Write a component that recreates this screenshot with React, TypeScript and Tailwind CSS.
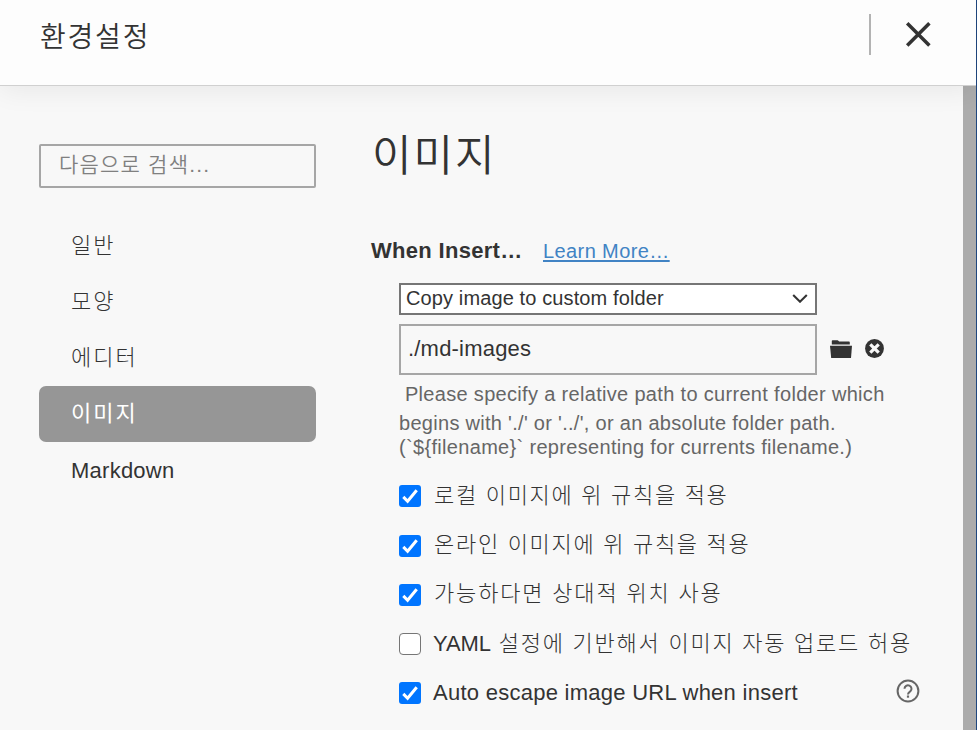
import React from "react";

const NAV = ["일반", "모양", "에디터", "이미지", "Markdown"];

type Option = { prefix?: string; label: string; checked: boolean; row: string; text: string; help?: boolean };

const OPTIONS: Option[] = [
  { label: "로컬 이미지에 위 규칙을 적용", checked: true, row: "h-[50px]", text: "ml-[13px] tracking-[1.7px] font-light" },
  { label: "온라인 이미지에 위 규칙을 적용", checked: true, row: "h-[49px]", text: "ml-[13px] pb-[2px] tracking-[1.7px] font-light" },
  { label: "가능하다면 상대적 위치 사용", checked: true, row: "h-[49px]", text: "ml-[13px] pb-[2px] tracking-[1.83px] font-light" },
  { prefix: "YAML", label: " 설정에 기반해서 이미지 자동 업로드 허용", checked: false, row: "h-[49px]", text: "ml-[12px] tracking-[1.75px] font-light" },
  { label: "Auto escape image URL when insert", checked: true, row: "h-[49px]", text: "ml-[12px] tracking-[0.26px]", help: true },
];

function CheckBox({ checked }: { checked: boolean }) {
  if (!checked) {
    return <span className="h-[22px] w-[22px] shrink-0 rounded-[4px] border-[1.5px] border-[#767676] bg-white" />;
  }
  return (
    <span className="flex h-[22px] w-[22px] shrink-0 rounded-[3px] bg-[#0075ff]">
      <svg width="22" height="22" viewBox="0 0 22 22" fill="none" stroke="#fff" strokeWidth="3">
        <path d="M4.3 11.9 8.6 16.2 17.7 5.2" />
      </svg>
    </span>
  );
}

function HelpIcon() {
  return (
    <svg className="mb-[3px]" width="24" height="24" viewBox="0 0 24 24" fill="none" stroke="#666" strokeWidth="2">
      <circle cx="12" cy="12" r="10.4" />
      <path d="M8.5 9.7a3.5 3.5 0 1 1 5.9 2.6C13 13.6 12 14 12 15.5" />
      <path d="M12 16.5v2.2" strokeWidth="2.2" />
    </svg>
  );
}

export default function App() {
  return (
    <div className="flex h-[730px] w-[977px] overflow-hidden bg-[#f8f8f8] font-['Liberation_Sans','Noto_Sans_CJK_KR',sans-serif] text-[#333]">
      <div className="flex w-[976px] flex-col">
        <header className="z-10 flex h-[86px] shrink-0 items-start border-b border-[#d0d0d0] bg-[#fdfdfd] shadow-[0_4px_28px_rgba(0,0,0,0.07)]">
          <h1 className="ml-[40px] mt-[18px] flex-1 whitespace-nowrap text-[28px] font-[350] leading-[40px] tracking-[1.8px]">환경설정</h1>
          <div className="mt-[14px] h-[41px] w-[2px] bg-[#b3b3b3]" />
          <svg className="ml-[34px] mr-[44px] mt-[21px]" width="27" height="27" viewBox="0 0 27 27" stroke="#333" strokeWidth="3.5">
            <path d="M2.2 2.2 24.4 24.4M24.4 2.2 2.2 24.4" />
          </svg>
        </header>

        <div className="flex min-h-0 flex-1">
          <aside className="ml-[39px] w-[277px] shrink-0 pt-[58px]">
            <div className="flex h-[44px] items-center rounded-[2px] border-2 border-[#a6a6a6] pb-[2px] pl-[18px]">
              <span className="whitespace-nowrap text-[21px] font-[350] leading-[30px] tracking-[1.2px] text-[#808080]">다음으로 검색...</span>
            </div>
            <nav className="mt-[30px]">
              {NAV.map((item) => (
                <div
                  key={item}
                  className={
                    "flex h-[56px] items-center rounded-[7px] pl-[32px] text-[22px] " +
                    (item === "Markdown" ? "tracking-[0.25px] " : "pb-[1px] tracking-[2px] ") +
                    (item === "이미지" ? "bg-[#969696] font-normal text-white" : item === "Markdown" ? "" : "font-light")
                  }
                >
                  {item}
                </div>
              ))}
            </nav>
          </aside>

          <main className="ml-[56px] flex-1">
            <h2 className="mt-[38px] h-[64px] whitespace-nowrap text-[43px] font-[350] leading-[64px] tracking-[2px]">이미지</h2>
            <div className="mt-[46px] flex h-[32px] items-center whitespace-nowrap">
              <span className="-ml-px w-[172px] text-[22px] font-bold tracking-[0.3px]">When Insert…</span>
              <a className="mt-px text-[20px] tracking-[0.4px] text-[#4183c4] underline decoration-2 underline-offset-2">Learn More…</a>
            </div>
            <div className="ml-[27px] mt-[17px]">
              <div className="flex h-[32px] w-[418px] items-center justify-between border-2 border-[#767676] bg-white pb-[2px] pl-[6px] pr-[7px]">
                <span className="-ml-px text-[20px] leading-[24px] tracking-[0.12px]">Copy image to custom folder</span>
                <svg width="16" height="10" viewBox="0 0 16 10" fill="none" stroke="#333" strokeWidth="2.1">
                  <path d="M1.2 2.1 8 8.7 14.8 2.1" />
                </svg>
              </div>
              <div className="mt-[9px] flex items-center">
                <div className="flex h-[51px] w-[418px] items-center border-2 border-[#a6a6a6] pl-[7px] pb-[2px] text-[22px] tracking-[0.2px]">./md-images</div>
                <svg className="mb-[2px] ml-[13px]" width="22" height="18" viewBox="0 0 22 18" fill="#333">
                  <path d="M1.8 4.4V1Q1.8.2 2.6.2H7.4Q8.2.2 8.6.9L9.1 1.6H19Q19.8 1.6 19.8 2.4V4.4Z" />
                  <path d="M0 5.7H22L21 18H1.2Z" />
                </svg>
                <svg className="mb-[2px] ml-[13px]" width="19" height="19" viewBox="0 0 19 19">
                  <circle cx="9.5" cy="9.5" r="9.4" fill="#333" />
                  <path d="M5.3 5.3 13.7 13.7M13.7 5.3 5.3 13.7" stroke="#f8f8f8" strokeWidth="3.2" />
                </svg>
              </div>
              <div className="mt-[5px] whitespace-pre text-[20px] tracking-[0.32px] text-[#666]">
                <p className="h-[29px] leading-[29px]"> Please specify a relative path to current folder which</p>
                <p className="h-[27px] leading-[29px] tracking-[0.29px]">begins with './' or '../', or an absolute folder path.</p>
                <p className="h-[24px] leading-[22px]">{"(`${filename}` representing for currents filename.)"}</p>
              </div>
              <div className="mt-[11px]">
                {OPTIONS.map((option) => (
                  <div key={option.label} className={"flex items-center " + option.row}>
                    <CheckBox checked={option.checked} />
                    <span className={"w-[463px] whitespace-pre text-[22px] leading-[30px] " + option.text}>
                      {option.prefix && <span className="tracking-[-0.1px]">{option.prefix}</span>}
                      {option.label}
                    </span>
                    {option.help && <HelpIcon />}
                  </div>
                ))}
              </div>
            </div>
          </main>
          <div className="w-[13px] shrink-0 bg-[#acacac]" />
        </div>
      </div>
      <div className="w-px bg-[#1f477f]" />
    </div>
  );
}
